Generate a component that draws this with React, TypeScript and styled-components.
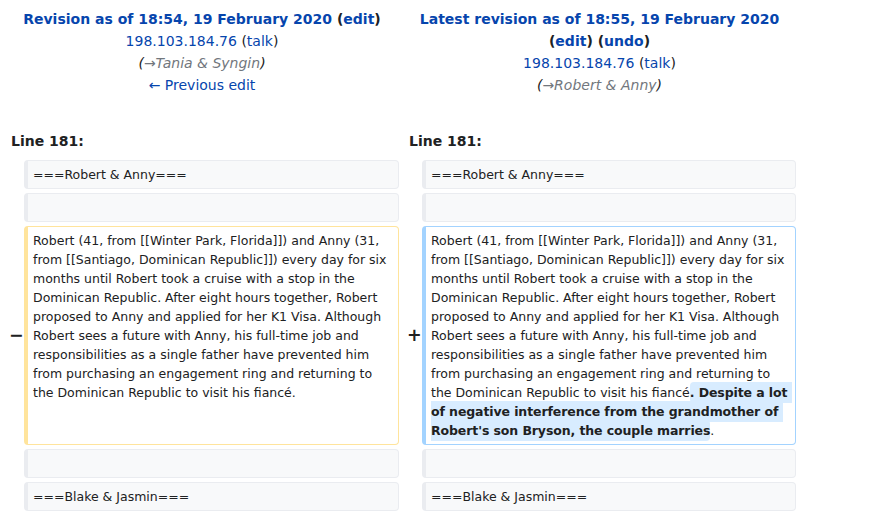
import React from "react";
import styled, { createGlobalStyle } from "styled-components";

const GlobalStyle = createGlobalStyle`
  html, body {
    margin: 0;
    padding: 0;
    background: #ffffff;
  }
  body {
    font-family: "DejaVu Sans", sans-serif;
    font-size: 14px;
    color: #202122;
  }
`;

const DiffGrid = styled.div`
  display: grid;
  grid-template-columns: 15px 375px 15px 374px;
  gap: 4px;
  padding: 4px 4px 4px 5px;
  width: max-content;
`;

const HeaderCell = styled.div`
  grid-column: span 2;
  text-align: center;
  padding: 4px 6px;
  line-height: 22px;
  min-width: 0;
`;

const HeaderLine = styled.div<{ $empty?: boolean }>`
  min-height: ${(p) => (p.$empty ? "22px" : "0")};
`;

const Title = styled.strong`
  font-weight: bold;
`;

const Link = styled.a`
  color: #0645ad;
  text-decoration: none;
  cursor: pointer;
`;

const Comment = styled.span`
  font-style: italic;
`;

const AutoComment = styled.span`
  color: #72777d;
`;

const LinenoCell = styled.div`
  grid-column: span 2;
  font-weight: bold;
  padding: 4px 6px;
  line-height: 22px;
`;

const Marker = styled.div`
  align-self: center;
  font-weight: bold;
  font-size: 17.5px;
  line-height: 1.2;
  padding: 4px;
  white-space: nowrap;
  overflow: visible;
  min-width: 0;
  box-sizing: border-box;
  width: 15px;
  text-align: left;
`;

type Kind = "context" | "deleted" | "added";

const borderFor = (k: Kind) =>
  k === "deleted" ? "#ffe49c" : k === "added" ? "#a3d3ff" : "#eaecf0";

const Content = styled.div<{ $kind: Kind }>`
  font-size: 12.5px;
  line-height: 19px;
  white-space: pre-wrap;
  overflow-wrap: break-word;
  padding: 4px ${(p) => (p.$kind === "added" ? "4px" : "6px")} 4px 5px;
  border-style: solid;
  border-width: 1px 1px 1px 4px;
  border-color: ${(p) => borderFor(p.$kind)};
  border-radius: 4px;
  background: ${(p) => (p.$kind === "context" ? "#f8f9fa" : "#ffffff")};
  min-height: 19px;
  min-width: 0;
`;

const DiffChange = styled.ins`
  text-decoration: none;
  font-weight: bold;
  letter-spacing: -0.1px;
  background: #d8ecff;
  border-radius: 4px;
  padding: 3px 0;
`;

const Empty = styled.div``;

const para =
  "Robert (41, from [[Winter Park, Florida]]) and Anny (31, from [[Santiago, Dominican Republic]]) every day for six months until Robert took a cruise with a stop in the Dominican Republic. After eight hours together, Robert proposed to Anny and applied for her K1 Visa. Although Robert sees a future with Anny, his full-time job and responsibilities as a single father have prevented him from purchasing an engagement ring and returning to the Dominican Republic to visit his fiancé";

const ContextRow: React.FC<{ text: string }> = ({ text }) => (
  <>
    <Empty />
    <Content $kind="context">{text}</Content>
    <Empty />
    <Content $kind="context">{text}</Content>
  </>
);

export default function App() {
  return (
    <>
      <GlobalStyle />
      <DiffGrid>
        <HeaderCell>
          <HeaderLine>
            <Title>
              <Link>Revision as of 18:54, 19 February 2020</Link> (<Link>edit</Link>)
            </Title>
          </HeaderLine>
          <HeaderLine>
            <Link>198.103.184.76</Link> (<Link>talk</Link>)
          </HeaderLine>
          <HeaderLine>
            <Comment>
              (<AutoComment>→Tania &amp; Syngin</AutoComment>)
            </Comment>
          </HeaderLine>
          <HeaderLine>
            <Link>← Previous edit</Link>
          </HeaderLine>
          <HeaderLine $empty />
        </HeaderCell>
        <HeaderCell>
          <HeaderLine>
            <Title>
              <Link>Latest revision as of 18:55, 19 February 2020</Link> (<Link>edit</Link>) (
              <Link>undo</Link>)
            </Title>
          </HeaderLine>
          <HeaderLine>
            <Link>198.103.184.76</Link> (<Link>talk</Link>)
          </HeaderLine>
          <HeaderLine>
            <Comment>
              (<AutoComment>→Robert &amp; Anny</AutoComment>)
            </Comment>
          </HeaderLine>
          <HeaderLine $empty />
        </HeaderCell>

        <LinenoCell>Line 181:</LinenoCell>
        <LinenoCell>Line 181:</LinenoCell>

        <ContextRow text="===Robert & Anny===" />
        <ContextRow text="" />

        <Marker>−</Marker>
        <Content $kind="deleted">{para}.</Content>
        <Marker>+</Marker>
        <Content $kind="added">
          {para}
          <DiffChange>
            . Despite a lot of negative interference from the grandmother of Robert's son Bryson, the couple marries
          </DiffChange>
          .
        </Content>

        <ContextRow text="" />
        <ContextRow text="===Blake & Jasmin===" />
      </DiffGrid>
    </>
  );
}
